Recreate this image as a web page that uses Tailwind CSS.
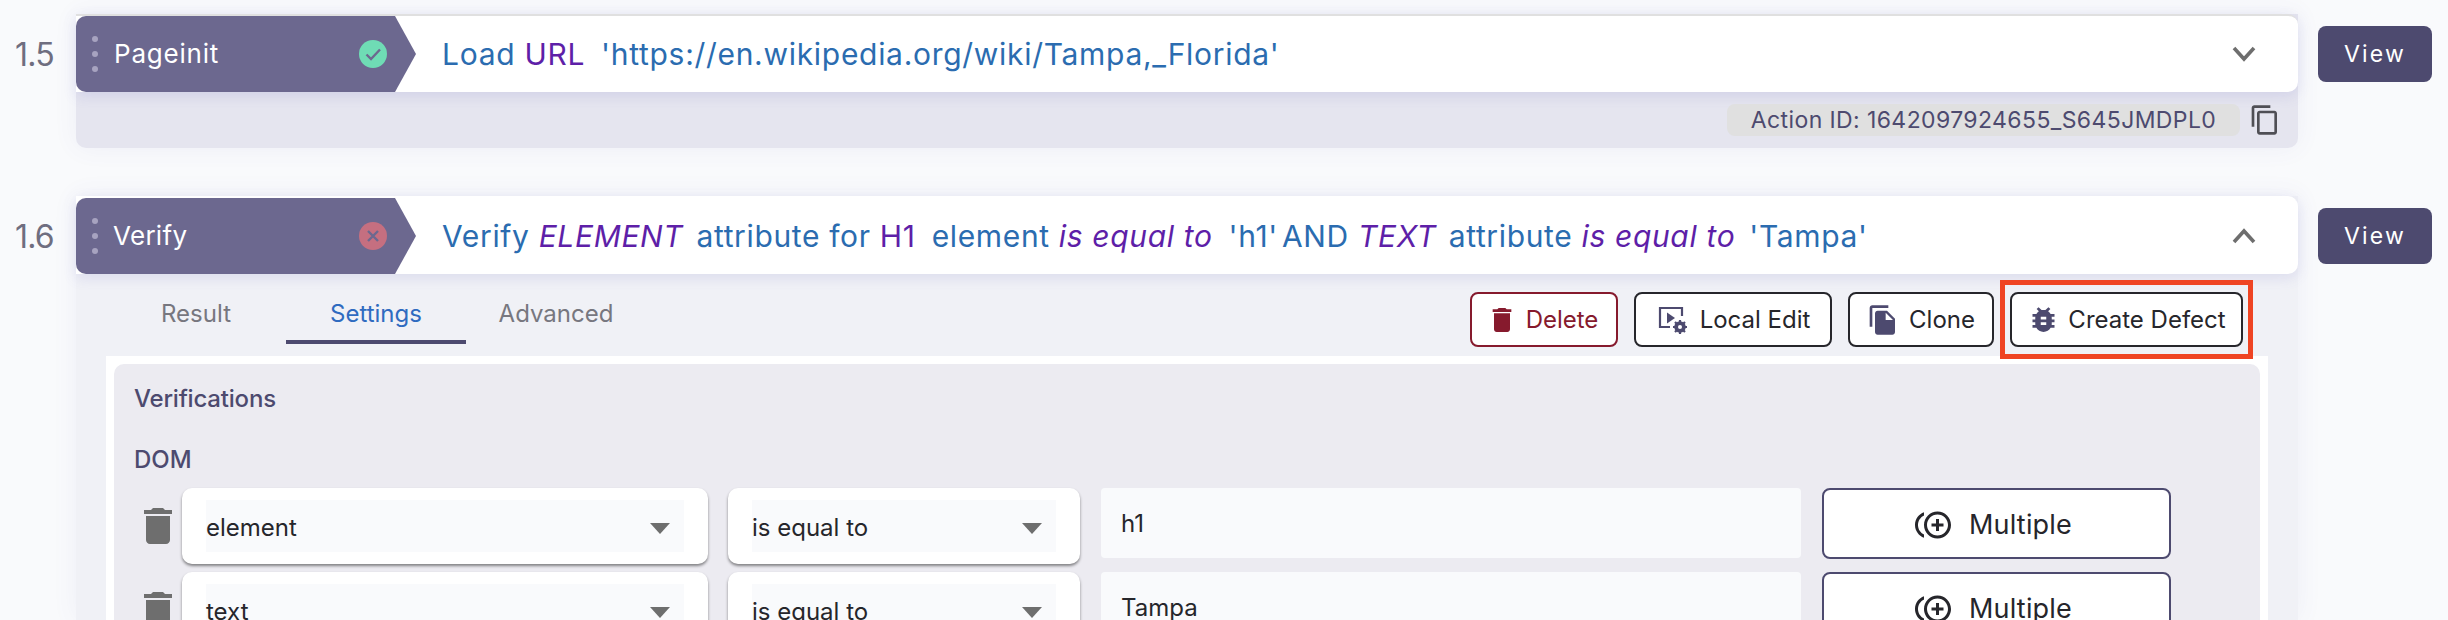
<!DOCTYPE html>
<html lang="en">
<head>
  <meta charset="UTF-8">
  <title>Test Steps</title>
  <script src="https://cdn.jsdelivr.net/npm/@tailwindcss/browser@4"></script>
</head>
<body class="bg-[#f9fafc] font-['Inter',sans-serif]">
  <div class="h-[620px] overflow-hidden pt-[14px] flex flex-col gap-[48px]">

    <!-- step 1.5 -->
    <div class="flex items-start shrink-0">
      <div class="w-[76px] h-[80px] pl-[15px] pt-[2px] flex items-center text-[32px] tracking-[-0.8px] text-[#6f6e80]">1.5</div>
      <div class="w-[2222px] rounded-b-[10px] bg-[#e5e5ef] shadow-[0_0_24px_rgba(90,90,170,0.07)]">
        <div class="h-[78px] bg-white border-t-2 border-[#e0e0e0] rounded-r-[10px] flex items-center shadow-[0_4px_14px_rgba(90,90,190,0.14)]">
          <div class="w-[340px] h-[76px] shrink-0 bg-[#6c688f] rounded-l-[10px] [clip-path:polygon(0_0,319px_0,340px_50%,319px_100%,0_100%)] flex items-center">
            <div class="w-[6px] ml-[16px] flex flex-col gap-[9px]">
              <span class="size-[6px] rounded-full bg-[#a7a3c0]"></span>
              <span class="size-[6px] rounded-full bg-[#a7a3c0]"></span>
              <span class="size-[6px] rounded-full bg-[#a7a3c0]"></span>
            </div>
            <span class="ml-[16px] mb-[2px] w-[245px] text-[26px] tracking-[0.8px] text-white">Pageinit</span>
            <svg class="size-[28px]" viewBox="0 0 28 28"><circle cx="14" cy="14" r="14" fill="#6fdcb5"/><path d="M7.5 14.5l4.500 4.500 9-9.500" fill="none" stroke="#6c688f" stroke-width="2.4"/></svg>
          </div>
          <div class="ml-[26px] flex-1 text-[30px] tracking-[0.7px] text-[#2b6cb0] whitespace-nowrap">Load <span class="text-[#5e1fa8]">URL</span><span class="ml-[16px]">'https://en.wikipedia.org/wiki/Tampa,_Florida'</span></div>
          <svg class="w-[24px] h-[16px] mr-[42px]" viewBox="0 0 24 16"><path d="M2 2l10 11L22 2" fill="none" stroke="#6e6e6e" stroke-width="3.6"/></svg>
        </div>
        <div class="h-[56px] flex items-center justify-end pr-[20px]">
          <div class="w-[513px] h-[32px] rounded-[8px] bg-[#e0e0e0] flex items-center justify-center text-[23px] tracking-[0.4px] text-[#4d4a6f]">Action ID: 1642097924655_S645JMDPL0</div>
          <svg class="size-[32px] ml-[9px] mr-[-3px]" viewBox="0 0 24 24" fill="#4f4f55"><path d="M16 1H4c-1.100 0-2 .9-2 2v14h2V3h12V1zm3 4H8c-1.100 0-2 .9-2 2v14c0 1.100.9 2 2 2h11c1.100 0 2-.9 2-2V7c0-1.100-.9-2-2-2zm0 16H8V7h11v14z"/></svg>
        </div>
      </div>
      <button class="ml-[20px] mt-[12px] w-[114px] h-[56px] rounded-[8px] bg-[#4d4a6f] text-white text-[23px] tracking-[2.2px]">View</button>
    </div>

    <!-- step 1.6 -->
    <div class="flex items-start shrink-0">
      <div class="w-[76px] h-[80px] pl-[15px] pt-[2px] flex items-center text-[32px] tracking-[-0.8px] text-[#6f6e80]">1.6</div>
      <div class="w-[2222px] h-[424px] bg-[#f0f1f6] shadow-[0_0_24px_rgba(90,90,170,0.07)]">
        <div class="h-[78px] bg-white border-t-2 border-white rounded-r-[10px] flex items-center shadow-[0_4px_14px_rgba(90,90,190,0.14)]">
          <div class="w-[340px] h-[76px] shrink-0 bg-[#6c688f] rounded-l-[10px] [clip-path:polygon(0_0,319px_0,340px_50%,319px_100%,0_100%)] flex items-center">
            <div class="w-[6px] ml-[16px] flex flex-col gap-[9px]">
              <span class="size-[6px] rounded-full bg-[#a7a3c0]"></span>
              <span class="size-[6px] rounded-full bg-[#a7a3c0]"></span>
              <span class="size-[6px] rounded-full bg-[#a7a3c0]"></span>
            </div>
            <span class="ml-[15px] mb-[2px] w-[246px] text-[26px] tracking-[0.3px] text-white">Verify</span>
            <svg class="size-[28px]" viewBox="0 0 28 28"><circle cx="14" cy="14" r="14" fill="#c56f80"/><path d="M9 9l10 10M19 9L9 19" fill="none" stroke="#6c688f" stroke-width="2.4"/></svg>
          </div>
          <div class="ml-[26px] flex-1 text-[30px] tracking-[0.65px] text-[#2b6cb0] whitespace-nowrap">Verify <i class="text-[#5e1fa8]">ELEMENT</i><span class="ml-[13px]">attribute for</span> <span class="text-[#5e1fa8]">H1</span><span class="ml-[16px]">element</span> <i class="text-[#5e1fa8]">is equal to</i><span class="ml-[16px]">'h1'</span><span class="ml-[4px]">AND</span> <i class="text-[#5e1fa8]">TEXT</i><span class="ml-[12px]">attribute</span> <i class="text-[#5e1fa8]">is equal to</i><span class="ml-[14px]">'Tampa'</span></div>
          <svg class="w-[24px] h-[16px] mr-[42px]" viewBox="0 0 24 16"><path d="M2 14L12 3l10 11" fill="none" stroke="#6e6e6e" stroke-width="3.6"/></svg>
        </div>

        <div class="relative mx-[30px] mt-[18px] h-[64px] flex items-start">
          <button class="w-[180px] h-[52px] pb-[8px] text-[24px] text-[#77777f]">Result</button>
          <button class="w-[180px] h-[52px] pb-[4px] text-[24px] text-[#2f6bc0] border-b-4 border-[#4d4a6f]">Settings</button>
          <button class="w-[180px] h-[52px] pb-[8px] text-[24px] text-[#77777f]">Advanced</button>
          <div class="ml-auto mr-[25px] flex gap-[16px] text-[24px] text-[#26262b]">
            <button class="w-[148px] h-[55px] pr-[4px] bg-white border-2 border-[#861a2d] rounded-[8px] flex items-center justify-center gap-[8px] text-[#861a2d]">
              <svg class="size-[32px]" viewBox="0 0 24 24" fill="#861a2d"><path d="M6 19c0 1.100.9 2 2 2h8c1.100 0 2-.9 2-2V7H6v12zM19 4h-3.500l-1-1h-5l-1 1H5v2h14V4z"/></svg>
              Delete
            </button>
            <button class="w-[198px] h-[55px] bg-white border-2 border-[#26262b] rounded-[8px] flex items-center justify-center gap-[12px]">
              <svg class="size-[32px]" viewBox="0 0 32 32"><path d="M26 12V4H4v19h10" fill="none" stroke="#4d4a6f" stroke-width="2.200"/><path d="M11 8.500l8 5.500-8 5.500z" fill="#4d4a6f"/><circle cx="24" cy="23" r="4.200" fill="none" stroke="#4d4a6f" stroke-width="3.200"/><path d="M24 16v14M17 23h14M19 18l10 10M29 18L19 28" stroke="#4d4a6f" stroke-width="2.200"/><circle cx="24" cy="23" r="2" fill="#fff"/></svg>
              Local Edit
            </button>
            <button class="w-[146px] h-[55px] bg-white border-2 border-[#26262b] rounded-[8px] flex items-center justify-center gap-[10px]">
              <svg class="size-[32px]" viewBox="0 0 24 24" fill="#4d4a6f"><path d="M16 1H4c-1.100 0-2 .9-2 2v14h2V3h12V1zm-1 4l6 6v10c0 1.100-.9 2-2 2H7.990C6.890 23 6 22.100 6 21l.01-14c0-1.100.89-2 1.990-2h7zm-1 7h5.500L14 6.500V12z"/></svg>
              Clone
            </button>
            <button class="w-[233px] h-[55px] bg-white border-2 border-[#26262b] rounded-[8px] flex items-center justify-center gap-[8px]">
              <svg class="size-[33px]" viewBox="0 0 24 24" fill="#4d4a6f"><path d="M20 8h-2.810c-.45-.78-1.070-1.450-1.820-1.960L17 4.410 15.590 3l-2.170 2.170C12.960 5.060 12.490 5 12 5c-.49 0-.96.06-1.410.17L8.410 3 7 4.410l1.620 1.630C7.880 6.550 7.260 7.220 6.810 8H4v2h2.090c-.05.33-.09.66-.09 1v1H4v2h2v1c0 .34.04.67.09 1H4v2h2.810c1.040 1.790 2.970 3 5.190 3s4.150-1.210 5.190-3H20v-2h-2.090c.05-.33.09-.66.09-1v-1h2v-2h-2v-1c0-.34-.04-.67-.09-1H20V8zm-6 8h-4v-2h4v2zm0-4h-4v-2h4v2z"/></svg>
              Create Defect
            </button>
          </div>
          <!-- annotation box round Create Defect -->
          <div class="absolute right-[15px] top-[-12px] w-[253px] h-[79px] border-[5px] border-[#ef4423]"></div>
        </div>

        <div class="mx-[30px] bg-white pt-[8px] px-[8px] h-[264px] overflow-hidden">
          <div class="bg-[#ecebf1] rounded-t-[10px] h-[256px] pl-[20px] text-[#4d4a6f] text-[24px] overflow-hidden">
            <div class="pt-[17px] h-[62px] font-medium tracking-[-0.2px]">Verifications</div>
            <div class="pt-[16px] h-[62px] font-medium">DOM</div>

            <div class="flex flex-col gap-[8px] text-[#26262b]">
              <div class="flex h-[76px] shrink-0">
                <svg class="w-[48px] h-[48px] mt-[14px] shrink-0" viewBox="0 0 24 24" fill="#6e6e6e"><path d="M6 19c0 1.100.9 2 2 2h8c1.100 0 2-.9 2-2V7H6v12zM19 4h-3.500l-1-1h-5l-1 1H5v2h14V4z"/></svg>
                <div class="w-[526px] h-[76px] bg-white rounded-[10px] shadow-[0_2px_3px_rgba(0,0,0,0.45)] px-[24px] py-[12px]">
                  <div class="h-[52px] bg-[#f9fafc] flex items-center justify-between pr-[14px] pt-[4px]">element
                    <span class="w-0 h-0 border-x-[10px] border-x-transparent border-t-[11px] border-t-[#6e6e6e]"></span></div>
                </div>
                <div class="w-[352px] h-[76px] ml-[20px] bg-white rounded-[10px] shadow-[0_2px_3px_rgba(0,0,0,0.45)] px-[24px] py-[12px]">
                  <div class="h-[52px] bg-[#f9fafc] flex items-center justify-between pr-[14px] pt-[4px]">is equal to
                    <span class="w-0 h-0 border-x-[10px] border-x-transparent border-t-[11px] border-t-[#6e6e6e]"></span></div>
                </div>
                <div class="w-[700px] h-[70px] ml-[21px] bg-[#f9fafc] rounded-[4px] pl-[20px] pt-[18px]">h1</div>
                <button class="w-[349px] h-[71px] ml-[21px] pr-[6px] pt-[3px] bg-white border-2 border-[#4d4a6f] rounded-[8px] flex items-center justify-center gap-[18px] text-[27px] tracking-[0.2px]">
                  <svg class="size-[36px]" viewBox="0 0 24 24" fill="#26262b"><path d="M16 8h-2v3h-3v2h3v3h2v-3h3v-2h-3zM2 12c0-2.790 1.640-5.200 4.010-6.320V3.520C2.520 4.760 0 8.090 0 12s2.520 7.240 6.010 8.480v-2.160C3.640 17.200 2 14.790 2 12zm13-9c-4.960 0-9 4.040-9 9s4.040 9 9 9 9-4.040 9-9-4.040-9-9-9zm0 16c-3.860 0-7-3.140-7-7s3.140-7 7-7 7 3.140 7 7-3.140 7-7 7z"/></svg>
                  Multiple
                </button>
              </div>
              <div class="flex h-[76px] shrink-0">
                <svg class="w-[48px] h-[48px] mt-[14px] shrink-0" viewBox="0 0 24 24" fill="#6e6e6e"><path d="M6 19c0 1.100.9 2 2 2h8c1.100 0 2-.9 2-2V7H6v12zM19 4h-3.500l-1-1h-5l-1 1H5v2h14V4z"/></svg>
                <div class="w-[526px] h-[76px] bg-white rounded-[10px] shadow-[0_2px_3px_rgba(0,0,0,0.45)] px-[24px] py-[12px]">
                  <div class="h-[52px] bg-[#f9fafc] flex items-center justify-between pr-[14px] pt-[4px]">text
                    <span class="w-0 h-0 border-x-[10px] border-x-transparent border-t-[11px] border-t-[#6e6e6e]"></span></div>
                </div>
                <div class="w-[352px] h-[76px] ml-[20px] bg-white rounded-[10px] shadow-[0_2px_3px_rgba(0,0,0,0.45)] px-[24px] py-[12px]">
                  <div class="h-[52px] bg-[#f9fafc] flex items-center justify-between pr-[14px] pt-[4px]">is equal to
                    <span class="w-0 h-0 border-x-[10px] border-x-transparent border-t-[11px] border-t-[#6e6e6e]"></span></div>
                </div>
                <div class="w-[700px] h-[70px] ml-[21px] bg-[#f9fafc] rounded-[4px] pl-[20px] pt-[18px]">Tampa</div>
                <button class="w-[349px] h-[71px] ml-[21px] pr-[6px] pt-[3px] bg-white border-2 border-[#4d4a6f] rounded-[8px] flex items-center justify-center gap-[18px] text-[27px] tracking-[0.2px]">
                  <svg class="size-[36px]" viewBox="0 0 24 24" fill="#26262b"><path d="M16 8h-2v3h-3v2h3v3h2v-3h3v-2h-3zM2 12c0-2.790 1.640-5.200 4.010-6.320V3.520C2.520 4.760 0 8.090 0 12s2.520 7.240 6.010 8.480v-2.160C3.640 17.200 2 14.790 2 12zm13-9c-4.960 0-9 4.040-9 9s4.040 9 9 9 9-4.040 9-9-4.040-9-9-9zm0 16c-3.860 0-7-3.140-7-7s3.140-7 7-7 7 3.140 7 7-3.140 7-7 7z"/></svg>
                  Multiple
                </button>
              </div>
            </div>
          </div>
        </div>
      </div>
      <button class="ml-[20px] mt-[12px] w-[114px] h-[56px] rounded-[8px] bg-[#4d4a6f] text-white text-[23px] tracking-[2.2px]">View</button>
    </div>

  </div>
</body>
</html>
